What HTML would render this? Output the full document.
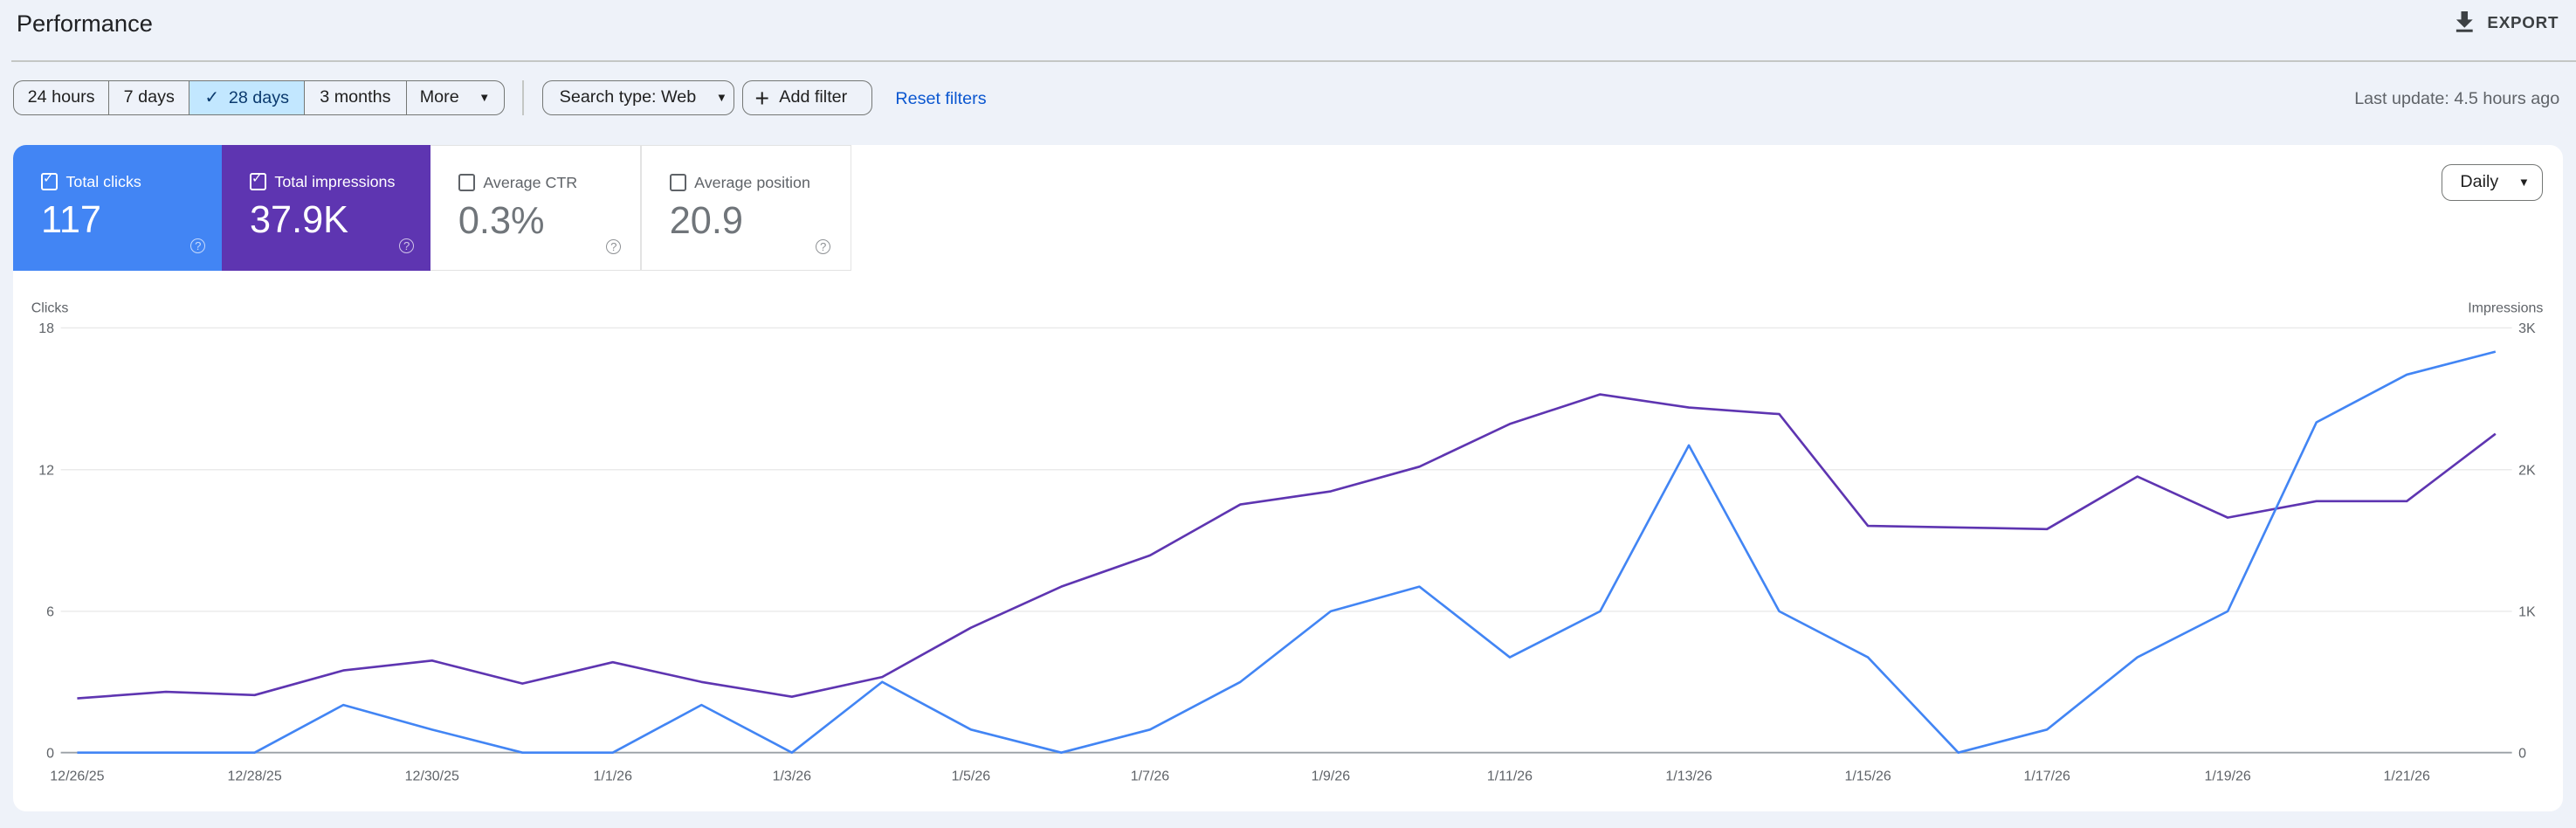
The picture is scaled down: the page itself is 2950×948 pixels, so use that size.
<!DOCTYPE html>
<html><head><meta charset="utf-8"><style>
html,body{margin:0;padding:0;}
body{width:2950px;height:948px;overflow:hidden;background:#eef2f9;font-family:"Liberation Sans",Arial,sans-serif;}
#z{zoom:1.88138;width:1568px;height:504px;position:relative;}
.a{position:absolute;}
.btn{position:absolute;top:49px;height:21px;box-sizing:border-box;border:1px solid #747775;border-radius:6px;font-size:10.5px;color:#1f1f1f;display:flex;align-items:center;}
.seg{height:100%;display:flex;align-items:center;justify-content:center;border-right:1px solid #747775;box-sizing:border-box;}
.tile{position:absolute;top:88px;height:77px;box-sizing:border-box;}
.tile .lab{position:absolute;left:17px;top:17px;font-size:9.5px;display:flex;align-items:center;}
.cb{width:8px;height:8px;border:1.2px solid currentColor;border-radius:1.5px;margin-right:5px;position:relative;}
.tile .val{position:absolute;left:17px;top:33px;font-size:23px;}
.tile .q{position:absolute;left:108px;top:57px;width:8px;height:8px;border:1px solid currentColor;border-radius:50%;font-size:7px;line-height:8px;text-align:center;opacity:.7;}
.ax{font-size:8.5px;color:#5f6368;}
</style></head><body><div id="z">
<div class="a" style="left:10px;top:6px;font-size:14.5px;color:#202124;">Performance</div>
<svg class="a" style="left:1494px;top:7px" width="12" height="13" viewBox="0 0 12 13"><path d="M4 0h4v5h3L6 10 1 5h3z" fill="#3c4043"/><rect x="1" y="11" width="10" height="1.6" fill="#3c4043"/></svg>
<div class="a" style="left:1514px;top:8px;font-size:10px;font-weight:bold;color:#3c4043;letter-spacing:.4px;">EXPORT</div>
<div class="a" style="left:7px;top:36.5px;width:1561px;height:1px;background:#c4c7c5;"></div>

<div class="btn" style="left:8px;width:299px;">
<div class="seg" style="width:58px">24 hours</div>
<div class="seg" style="width:49px">7 days</div>
<div class="seg" style="width:70px;background:#c2e7ff;color:#0b3a6e">✓&nbsp; 28 days</div>
<div class="seg" style="width:62px">3 months</div>
<div class="seg" style="width:58px;border-right:none;justify-content:flex-start;padding-left:8px">More<span style="font-size:7px;margin-left:12px">▼</span></div>
</div>
<div class="a" style="left:318px;top:49px;width:1px;height:21px;background:#c4c7c5"></div>
<div class="btn" style="left:330px;width:117px;padding-left:10px">Search type: Web<span style="font-size:7px;margin-left:12px">▼</span></div>
<div class="btn" style="left:452px;width:79px;padding-left:7px"><span style="font-size:15px;font-weight:300;margin-right:6px;line-height:10px">+</span>Add filter</div>
<div class="a" style="left:545px;top:54px;font-size:10.5px;color:#0b57d0;">Reset filters</div>
<div class="a" style="right:10px;top:54px;font-size:10.5px;color:#5f6368;">Last update: 4.5 hours ago</div>

<div class="a" style="left:8px;top:88px;width:1552px;height:406px;background:#fff;border-radius:8px;"></div>
<div class="tile" style="left:8px;width:127px;background:#4285f4;color:#fff;border-top-left-radius:8px"><div class="lab"><div class="cb"><span style="position:absolute;left:0;top:-3px;font-size:8px">✓</span></div>Total clicks</div><div class="val">117</div><div class="q">?</div></div>
<div class="tile" style="left:135px;width:127px;background:#5e35b1;color:#fff"><div class="lab"><div class="cb"><span style="position:absolute;left:0;top:-3px;font-size:8px">✓</span></div>Total impressions</div><div class="val">37.9K</div><div class="q">?</div></div>
<div class="tile" style="left:262px;width:128px;border:1px solid #e3e3e3;border-left:none;color:#5f6368"><div class="lab"><div class="cb"></div>Average CTR</div><div class="val" style="color:#70757a">0.3%</div><div class="q" style="left:107px">?</div></div>
<div class="tile" style="left:390px;width:128px;border:1px solid #e3e3e3;color:#5f6368"><div class="lab" style="left:17px"><div class="cb"></div>Average position</div><div class="val" style="color:#70757a">20.9</div><div class="q" style="left:106px">?</div></div>

<div class="a" style="left:1486px;top:100px;width:62px;height:22px;box-sizing:border-box;border:1px solid #747775;border-radius:6px;font-size:10.5px;color:#1f1f1f;display:flex;align-items:center;padding-left:11px">Daily<span style="font-size:7px;margin-left:12px">▼</span></div>

<svg class="a" style="left:0;top:0" width="1568" height="504">
<g font-family="Liberation Sans,Arial,sans-serif" font-size="8.5" fill="#5f6368">
<text x="19" y="190">Clicks</text>
<text x="1548" y="190" text-anchor="end">Impressions</text>
<text x="33" y="202.5" text-anchor="end">18</text>
<text x="33" y="289" text-anchor="end">12</text>
<text x="33" y="375" text-anchor="end">6</text>
<text x="33" y="461" text-anchor="end">0</text>
<text x="1533" y="202.5">3K</text>
<text x="1533" y="289">2K</text>
<text x="1533" y="375">1K</text>
<text x="1533" y="461">0</text>
<g text-anchor="middle">
<text x="47" y="475">12/26/25</text><text x="155" y="475">12/28/25</text><text x="263" y="475">12/30/25</text><text x="373" y="475">1/1/26</text><text x="482" y="475">1/3/26</text><text x="591" y="475">1/5/26</text><text x="700" y="475">1/7/26</text><text x="810" y="475">1/9/26</text><text x="919" y="475">1/11/26</text><text x="1028" y="475">1/13/26</text><text x="1137" y="475">1/15/26</text><text x="1246" y="475">1/17/26</text><text x="1356" y="475">1/19/26</text><text x="1465" y="475">1/21/26</text>
</g></g>
<g stroke="#ebebeb" stroke-width="0.8"><line x1="37" y1="199.5" x2="1529" y2="199.5"/><line x1="37" y1="285.8" x2="1529" y2="285.8"/><line x1="37" y1="372" x2="1529" y2="372"/></g>
<line x1="37" y1="458" x2="1529" y2="458" stroke="#9aa0a6" stroke-width="1"/>
<polyline fill="none" stroke="#5e35b1" stroke-width="1.4" stroke-linejoin="round" points="47,425 101,421 155,423 209,408 263,402 318,416 373,403 427,415 482,424 537,412 591,382 646,357 700,338 755,307 810,299 864,284 919,258 974,240 1028,248 1083,252 1137,320 1192,321 1246,322 1301,290 1356,315 1410,305 1465,305 1519,264"/>
<polyline fill="none" stroke="#4285f4" stroke-width="1.4" stroke-linejoin="round" points="47,458 101,458 155,458 209,429 263,444 318,458 373,458 427,429 482,458 537,415 591,444 646,458 700,444 755,415 810,372 864,357 919,400 974,372 1028,271 1083,372 1137,400 1192,458 1246,444 1301,400 1356,372 1410,257 1465,228 1519,214"/>
</svg>
</div></body></html>
